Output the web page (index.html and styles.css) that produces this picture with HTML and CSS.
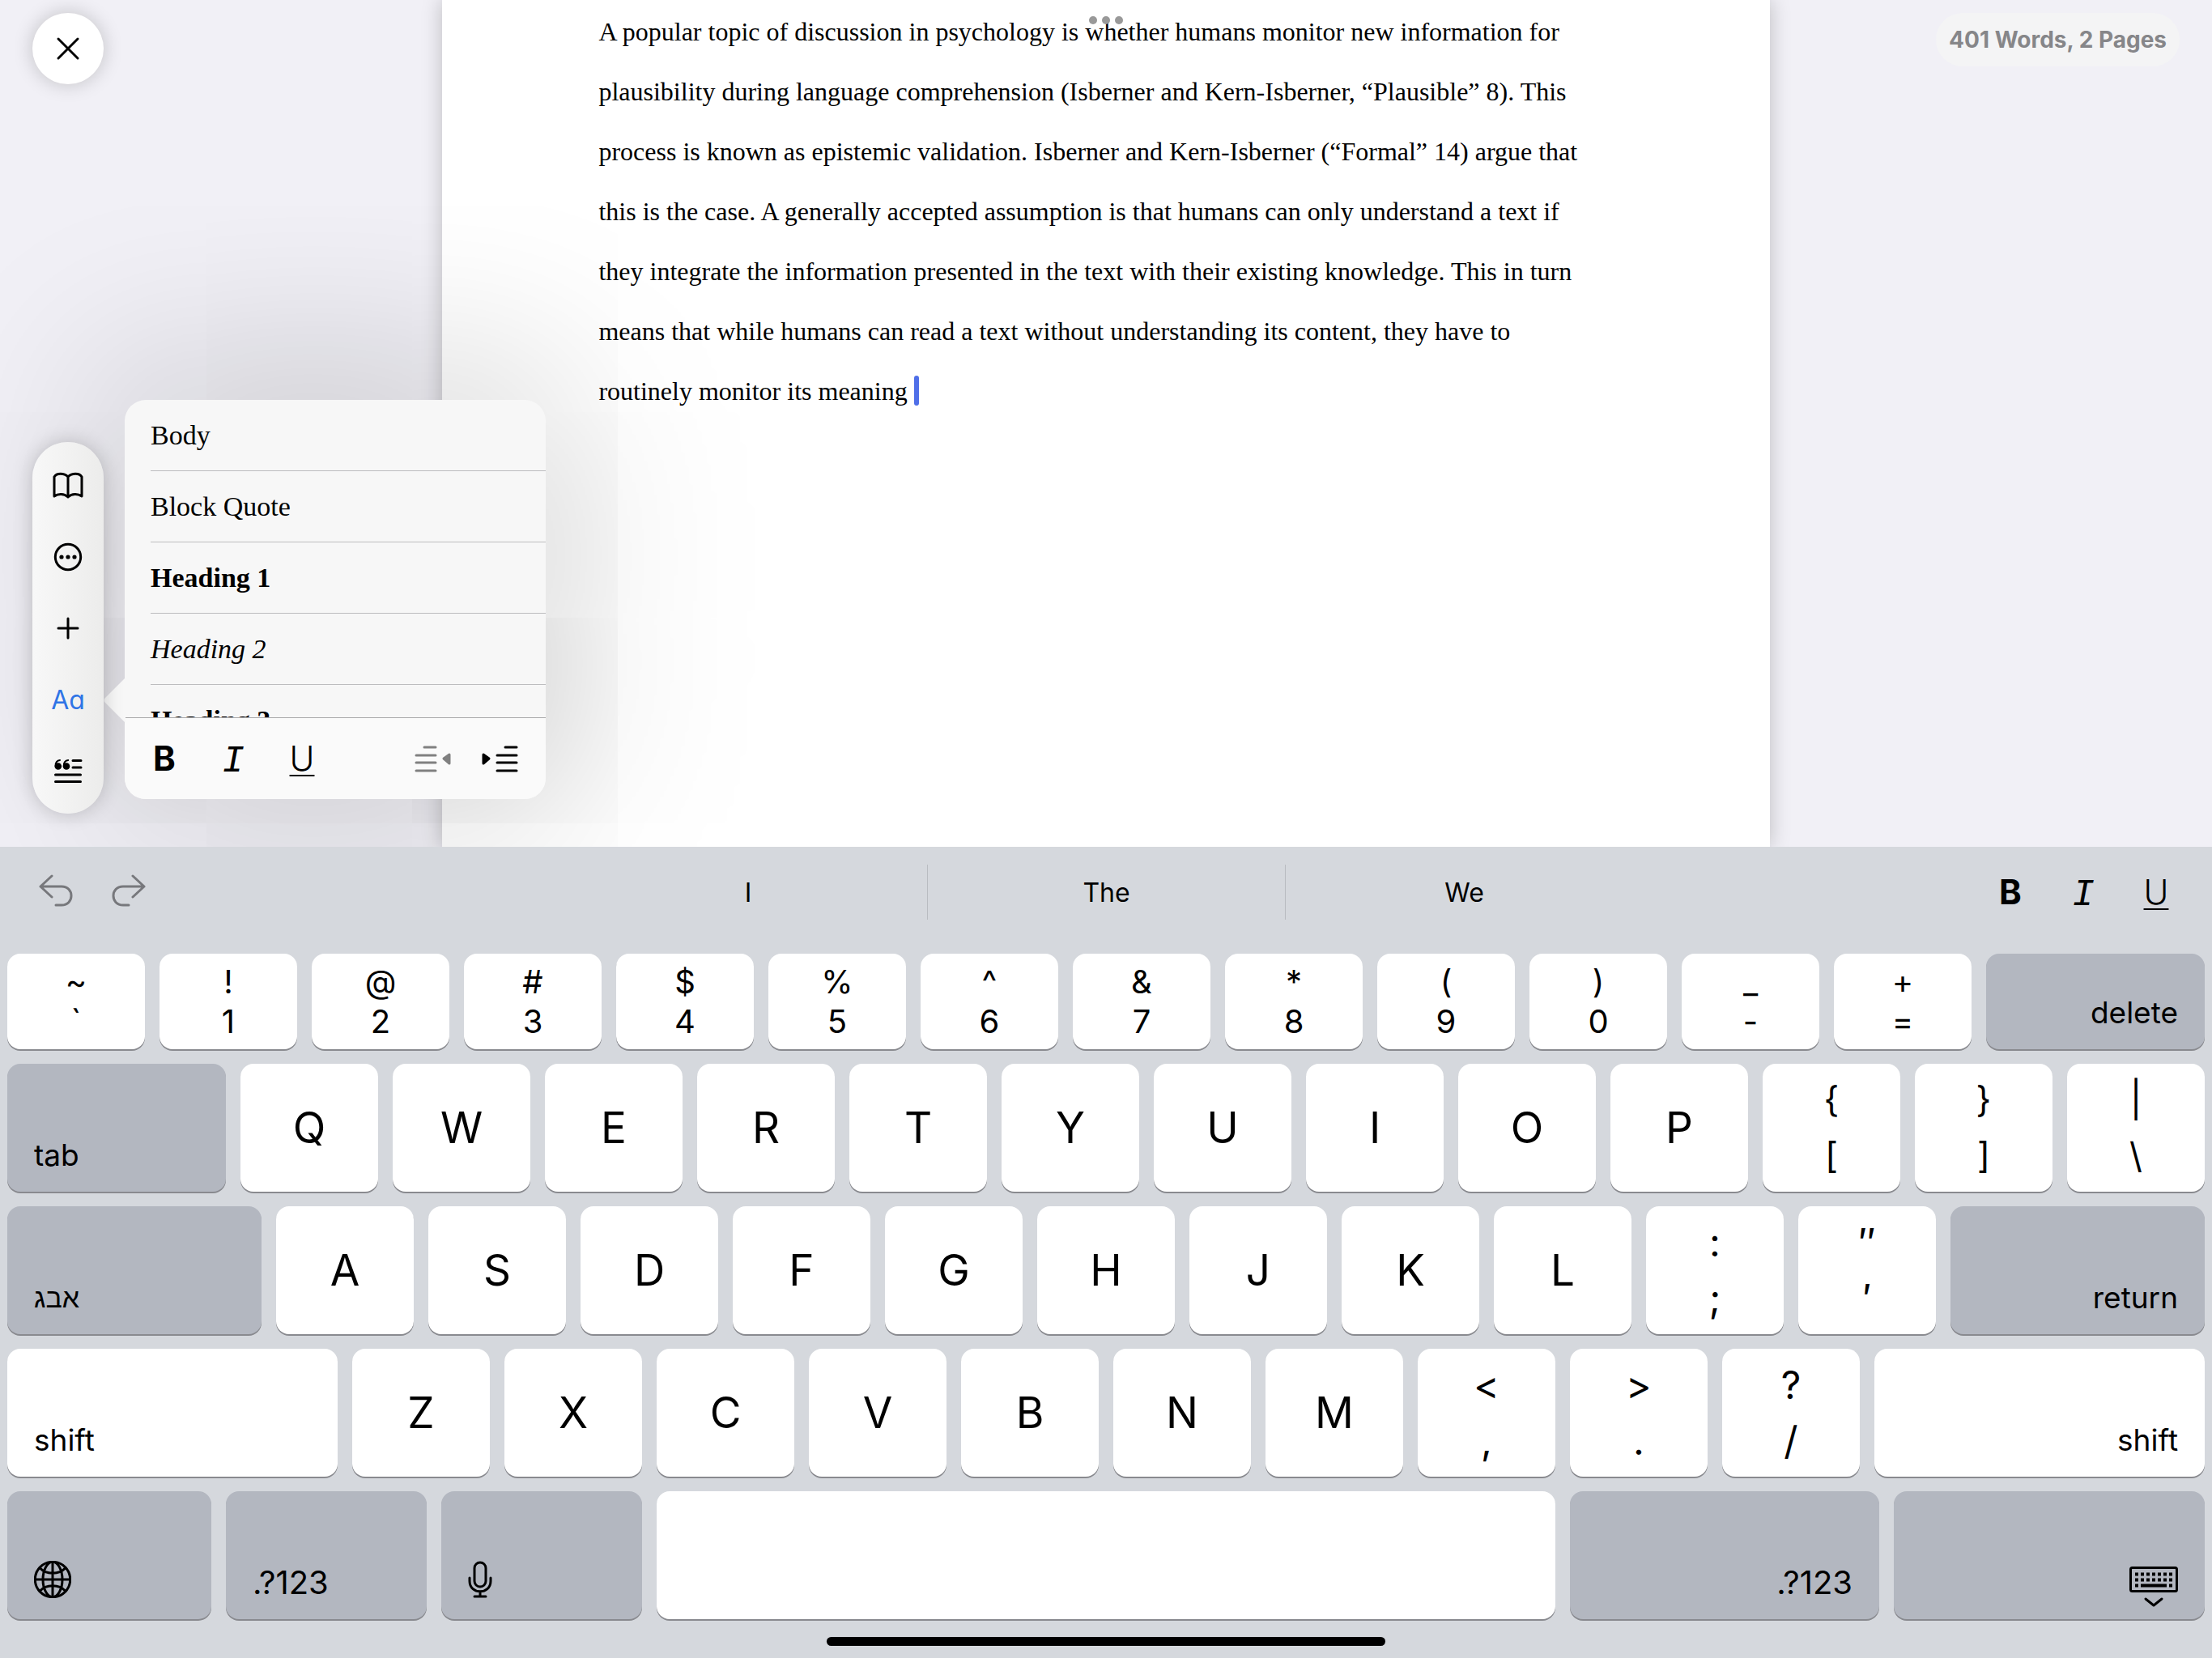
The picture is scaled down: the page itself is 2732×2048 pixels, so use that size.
FILE: index.html
```html
<!DOCTYPE html>
<html lang="en">
<head>
<meta charset="utf-8">
<meta name="viewport" content="width=device-width, initial-scale=1">
<title>Essay editor</title>
<link rel="stylesheet" href="styles.css">
</head>
<body>
<main class="editor">
  <article class="sheet">
    <p class="paragraph">A popular topic of discussion in psychology is whether humans monitor new information for plausibility during language comprehension (Isberner and Kern-Isberner, “Plausible” 8). This process is known as epistemic validation. Isberner and Kern-Isberner (“Formal” 14) argue that this is the case. A generally accepted assumption is that humans can only understand a text if they integrate the information presented in the text with their existing knowledge. This in turn means that while humans can read a text without understanding its content, they have to routinely monitor its meaning <span class="caret"></span></p>
  </article>

  <div class="multitask" aria-hidden="true"><i></i><i></i><i></i></div>

  <button class="close" aria-label="Close">
    <svg width="32" height="32" viewBox="0 0 32 32"><path d="M4 4L28 28M28 4L4 28"/></svg>
  </button>

  <div class="counter">401 Words, 2 Pages</div>

  <section class="popover" aria-label="Text style">
    <svg class="popover-arrow" width="27" height="56" viewBox="0 0 27 56"><path d="M27 0V56L2 31Q-1 28 2 25Z"/></svg>
    <ul class="styles">
      <li><button class="style">Body</button></li>
      <li><button class="style">Block Quote</button></li>
      <li><button class="style style-bold">Heading 1</button></li>
      <li><button class="style style-italic">Heading 2</button></li>
      <li><button class="style style-bold">Heading 3</button></li>
    </ul>
    <div class="formatbar">
      <button class="format format-b">B</button>
      <button class="format format-i">I</button>
      <button class="format format-u">U</button>
      <span class="spacer"></span>
      <button class="format indent" disabled aria-label="Decrease indent">
        <svg width="46" height="34" viewBox="0 0 46 34"><path class="bars" d="M12 3H26M2 13H26M2 22H26M2 32H26"/><path class="tip" d="M36 17L43 12V23Z"/></svg>
      </button>
      <button class="format indent" aria-label="Increase indent">
        <svg width="46" height="34" viewBox="0 0 46 34"><path class="bars" d="M30 3H44M20 13H44M20 22H44M20 32H44"/><path class="tip" d="M10 17L3 12V23Z"/></svg>
      </button>
    </div>
  </section>

  <nav class="sidebar" aria-label="Tools">
    <button class="tool" aria-label="Library">
      <svg width="40" height="34" viewBox="0 0 40 34"><path d="M20 31V6C15 1 6 1 3 6V30C8 26.500 15 26.500 20 31C25 26.500 32 26.500 37 30V6C34 1 25 1 20 6"/></svg>
    </button>
    <button class="tool" aria-label="More">
      <svg width="36" height="36" viewBox="0 0 36 36"><circle cx="18" cy="18" r="15.700"/><g class="solid"><circle cx="10" cy="18" r="2.600"/><circle cx="18" cy="18" r="2.600"/><circle cx="26" cy="18" r="2.600"/></g></svg>
    </button>
    <button class="tool" aria-label="Insert">
      <svg width="30" height="30" viewBox="0 0 30 30"><path d="M15 3V27M3 15H27"/></svg>
    </button>
    <button class="tool tool-active">Aa</button>
    <button class="tool" aria-label="Citations">
      <svg width="36" height="32" viewBox="0 0 36 32"><path d="M24 3.500H34M24 12H34M2.500 21H33.500M2.500 29.500H33.500"/><g class="solid"><circle cx="5.800" cy="10.500" r="4.300"/><circle cx="16" cy="10.500" r="4.300"/></g><path class="tail" d="M2.600 10C2.500 6 4.500 3.500 8 3M12.800 10C12.700 6 14.700 3.500 18.200 3"/></svg>
    </button>
  </nav>
</main>

<section class="keyboard" aria-label="Keyboard">
  <div class="shortcuts">
    <div class="history">
      <button class="shortcut" aria-label="Undo"><svg width="44" height="44" viewBox="0 0 44 44"><path d="M17 2L3 15L17 28M3 15H29C45 15 45 38 29 38H22"/></svg></button>
      <button class="shortcut" aria-label="Redo"><svg width="44" height="44" viewBox="0 0 44 44"><path d="M27 2L41 15L27 28M41 15H15C-1 15 -1 38 15 38H22"/></svg></button>
    </div>
    <div class="suggestions">
      <button class="suggestion">I</button>
      <button class="suggestion">The</button>
      <button class="suggestion">We</button>
    </div>
    <div class="typeface">
      <button class="format format-b">B</button>
      <button class="format format-i">I</button>
      <button class="format format-u">U</button>
    </div>
  </div>

  <div class="keys">
    <div class="row row-numbers">
      <button class="key dual"><span>~</span><span>`</span></button>
      <button class="key dual"><span>!</span><span>1</span></button>
      <button class="key dual"><span>@</span><span>2</span></button>
      <button class="key dual"><span>#</span><span>3</span></button>
      <button class="key dual"><span>$</span><span>4</span></button>
      <button class="key dual"><span>%</span><span>5</span></button>
      <button class="key dual"><span>^</span><span>6</span></button>
      <button class="key dual"><span>&amp;</span><span>7</span></button>
      <button class="key dual"><span>*</span><span>8</span></button>
      <button class="key dual"><span>(</span><span>9</span></button>
      <button class="key dual"><span>)</span><span>0</span></button>
      <button class="key dual"><span>_</span><span>-</span></button>
      <button class="key dual"><span>+</span><span>=</span></button>
      <button class="key word gray at-end">delete</button>
    </div>
    <div class="row row-top">
      <button class="key word gray">tab</button>
      <button class="key">Q</button>
      <button class="key">W</button>
      <button class="key">E</button>
      <button class="key">R</button>
      <button class="key">T</button>
      <button class="key">Y</button>
      <button class="key">U</button>
      <button class="key">I</button>
      <button class="key">O</button>
      <button class="key">P</button>
      <button class="key dual bracket"><span>{</span><span>[</span></button>
      <button class="key dual bracket"><span>}</span><span>]</span></button>
      <button class="key dual bracket"><span>|</span><span>\</span></button>
    </div>
    <div class="row row-home">
      <button class="key word gray hebrew" lang="he">אבג</button>
      <button class="key">A</button>
      <button class="key">S</button>
      <button class="key">D</button>
      <button class="key">F</button>
      <button class="key">G</button>
      <button class="key">H</button>
      <button class="key">J</button>
      <button class="key">K</button>
      <button class="key">L</button>
      <button class="key dual"><span>:</span><span>;</span></button>
      <button class="key dual"><span>″</span><span>′</span></button>
      <button class="key word gray at-end">return</button>
    </div>
    <div class="row row-shift">
      <button class="key word">shift</button>
      <button class="key">Z</button>
      <button class="key">X</button>
      <button class="key">C</button>
      <button class="key">V</button>
      <button class="key">B</button>
      <button class="key">N</button>
      <button class="key">M</button>
      <button class="key dual"><span>&lt;</span><span>,</span></button>
      <button class="key dual"><span>&gt;</span><span>.</span></button>
      <button class="key dual"><span>?</span><span>/</span></button>
      <button class="key word at-end">shift</button>
    </div>
    <div class="row row-space">
      <button class="key word gray" aria-label="Next keyboard">
        <svg width="46" height="46" viewBox="0 0 46 46"><circle cx="23" cy="23" r="21.700"/><ellipse cx="23" cy="23" rx="12" ry="21.700"/><path d="M23 1V45M1 23H45M7 8.500C15 17.500 31 17.500 39 8.500M7 37.500C15 28.500 31 28.500 39 37.500"/></svg>
      </button>
      <button class="key word gray digits">.?123</button>
      <button class="key word gray" aria-label="Dictate">
        <svg width="30" height="46" viewBox="0 0 30 46"><rect x="8" y="2" width="14" height="30" rx="7"/><path d="M2 21V25C2 42 28 42 28 25V21M15 38V44M8 44H22"/></svg>
      </button>
      <button class="key" aria-label="Space"></button>
      <button class="key word gray at-end digits">.?123</button>
      <button class="key word gray at-end dismiss" aria-label="Hide keyboard">
        <svg width="60" height="50" viewBox="0 0 60 50"><rect x="1.500" y="1.500" width="57" height="29" rx="2"/><path class="dots" d="M7 9.500H54M7 16.500H54"/><path class="bar" d="M7 23.500H11M14 23.500H46M49 23.500H53"/><path d="M20 40L30 48L40 40"/></svg>
      </button>
    </div>
  </div>
  <div class="home" aria-hidden="true"></div>
</section>
</body>
</html>
```

FILE: styles.css
```css
* { box-sizing: border-box; }

body {
  margin: 0;
  min-height: 100vh;
  display: flex;
  flex-direction: column;
  background: #f1f0f6;
  color: #000;
  font-family: Inter, "Liberation Sans", sans-serif;
}

button {
  margin: 0;
  padding: 0;
  border: 0;
  background: none;
  color: inherit;
  font: inherit;
}

svg {
  display: block;
  fill: none;
  stroke: currentColor;
  stroke-width: 3;
  stroke-linecap: round;
  stroke-linejoin: round;
}

.solid { fill: currentColor; stroke: none; }

/* Document */
.editor {
  position: relative;
  flex: 1;
  display: flex;
  justify-content: center;
  overflow: hidden;
}

.sheet {
  width: 60%;
  padding: 2px 208px 2px 193px;
  background: #fff;
  box-shadow: 0 0 24px rgba(0, 0, 0, 0.22);
}

.paragraph {
  margin: 0;
  font-family: "Liberation Serif", "Times New Roman", serif;
  font-size: 32px;
  line-height: 74px;
}

.caret {
  display: inline-block;
  width: 6px;
  height: 37px;
  border-radius: 3px;
  background: #4f6fe8;
  vertical-align: -7px;
}

.multitask {
  position: absolute;
  top: 20px;
  left: 50%;
  margin-left: -21px;
  display: flex;
  gap: 6px;
}

.multitask i {
  width: 10px;
  height: 10px;
  border-radius: 50%;
  background: #999;
}

.close {
  position: absolute;
  top: 16px;
  left: 40px;
  width: 88px;
  height: 88px;
  display: grid;
  place-items: center;
  border-radius: 50%;
  background: #fff;
  box-shadow: 0 0 24px rgba(0, 0, 0, 0.2);
}

.counter {
  position: absolute;
  top: 16px;
  right: 40px;
  padding: 0 16px;
  border-radius: 33px;
  background: #f4f4f5;
  color: #868689;
  font-size: 28px;
  font-weight: 700;
  line-height: 66px;
}

/* Style popover */
.popover {
  position: absolute;
  left: 154px;
  bottom: 59px;
  width: 520px;
  border-radius: 26px;
  background: #f7f7f7;
  box-shadow: 0 0 240px 20px rgba(0, 0, 0, 0.22);
}

.popover-arrow {
  position: absolute;
  right: 100%;
  top: 343px;
  margin-right: -1px;
  fill: #f7f7f7;
  stroke: none;
}

.styles {
  height: 392px;
  margin: 0;
  padding: 0 0 0 32px;
  overflow: hidden;
  list-style: none;
}

.style {
  display: block;
  width: 100%;
  height: 88px;
  border-bottom: 1px solid #bdbdbf;
  font-family: "Liberation Serif", "Times New Roman", serif;
  font-size: 34px;
  text-align: left;
}

.style-bold { font-weight: 700; }
.style-italic { font-style: italic; }

.formatbar {
  display: flex;
  align-items: center;
  height: 101px;
  padding: 0 34px 0 19px;
  border-top: 1px solid #a9a9ab;
  border-radius: 0 0 26px 26px;
  background: #fafafa;
}

.spacer { flex: 1; }

.format {
  width: 60px;
  height: 60px;
  margin-right: 25px;
  font-size: 42px;
  line-height: 52px;
  text-align: center;
}

.format-b { font-weight: 700; }

.format-i {
  padding-top: 7px;
  font-family: "Liberation Mono", monospace;
  font-size: 46px;
  font-style: italic;
}

.format-u {
  font-weight: 300;
  text-decoration: underline;
  text-decoration-thickness: 2px;
  text-underline-offset: 5px;
}

.indent {
  width: 46px;
  margin: 0 0 0 36px;
  display: grid;
  place-items: center;
}

.indent:disabled { color: #808080; }

.tip { fill: currentColor; }

/* Floating tool strip */
.sidebar {
  position: absolute;
  left: 40px;
  bottom: 41px;
  width: 88px;
  padding: 10px 0 9px;
  display: flex;
  flex-direction: column;
  border-radius: 44px;
  background: linear-gradient(90deg, #f8f8f8, #ececeb);
  box-shadow: 0 0 24px rgba(0, 0, 0, 0.2);
}

.tool {
  height: 88px;
  display: grid;
  place-items: center;
  font-size: 32px;
}

.tool-active {
  color: #2f74e6;
  font-feature-settings: "cv11";
}

.tail { stroke-width: 2; }

/* Keyboard */
.keyboard {
  background: #d5d8dd;
}

.shortcuts {
  display: grid;
  grid-template-columns: 703fr 1326fr 703fr;
  align-items: center;
  height: 112px;
  margin-bottom: 20px;
}

.history {
  display: flex;
  gap: 46px;
  padding-left: 47px;
  color: #77787c;
}

.suggestions {
  display: grid;
  grid-template-columns: repeat(3, 1fr);
}

.suggestion {
  height: 68px;
  font-size: 32px;
}

.suggestion + .suggestion { border-left: 1px solid #b9bcc1; }

.typeface {
  display: flex;
  justify-content: flex-end;
  gap: 30px;
  padding-right: 39px;
}

.typeface .format { margin-right: 0; }

.keys {
  display: flex;
  flex-direction: column;
  gap: 18px;
  padding: 0 9px;
}

.row {
  display: grid;
  gap: 18px;
  height: 158px;
}

.row-numbers {
  grid-template-columns: repeat(13, 170fr) 270fr;
  height: 118px;
}

.row-top { grid-template-columns: 270fr repeat(13, 170fr); }
.row-home { grid-template-columns: 314fr repeat(11, 170fr) 314fr; }
.row-shift { grid-template-columns: 408fr repeat(10, 170fr) 408fr; }
.row-space { grid-template-columns: 252fr 248fr 248fr 1110fr 382fr 384fr; }

.key {
  min-width: 0;
  border-radius: 16px;
  background: #fff;
  box-shadow: 0 2px 0 #898a8f;
  font-size: 53px;
}

.dual {
  display: flex;
  flex-direction: column;
  align-items: center;
  justify-content: center;
  font-size: 48px;
  line-height: 69px;
}

.row-numbers .dual {
  font-size: 40px;
  line-height: 49px;
}

.bracket { font-size: 44px; }

.word {
  display: flex;
  align-items: flex-end;
  padding: 0 33px 22px;
  font-size: 37px;
  line-height: 46px;
}

.word svg { margin-bottom: 4px; }

.at-end { justify-content: flex-end; }

.digits { font-size: 40px; }

.hebrew {
  font-family: "Liberation Sans", sans-serif;
  font-size: 34px;
}

.gray { background: #b3b7c0; }

.dismiss { padding-bottom: 11px; }

.dots {
  stroke-width: 4;
  stroke-linecap: butt;
  stroke-dasharray: 4 3;
}

.bar {
  stroke-width: 4;
  stroke-linecap: butt;
}

.home {
  width: 690px;
  max-width: 60%;
  height: 11px;
  margin: 22px auto 15px;
  border-radius: 6px;
  background: #000;
}
```
